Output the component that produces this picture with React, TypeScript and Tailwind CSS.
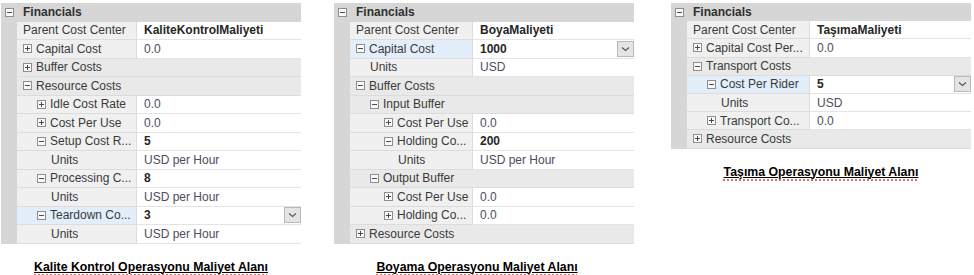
import React from 'react'

type Icon = 'plus' | 'minus'

type Row =
  | { kind: 'header'; label: string }
  | { kind: 'cat'; level: number; label: string; icon: Icon }
  | {
      kind: 'prop'
      level: number
      label: string
      icon?: Icon
      value: string
      bold?: boolean
      selected?: boolean
    }

// indent of the expander box (or text when there is none), per level
const iconIndent = ['pl-[6px]', 'pl-[20px]', 'pl-[34px]', 'pl-[48px]']
const textIndent = ['pl-[6px]', 'pl-[20px]', 'pl-[34px]', 'pl-[48px]']

const panels: { rows: Row[]; caption: string; rowH: string; labelW: string; captionPad?: string }[] = [
  {
    caption: 'Kalite Kontrol Operasyonu Maliyet Alanı',
    rowH: 'h-[18.5px]',
    labelW: 'w-[120px]',
    rows: [
      { kind: 'header', label: 'Financials' },
      { kind: 'prop', level: 0, label: 'Parent Cost Center', value: 'KaliteKontrolMaliyeti', bold: true },
      { kind: 'prop', level: 0, label: 'Capital Cost', icon: 'plus', value: '0.0' },
      { kind: 'cat', level: 0, label: 'Buffer Costs', icon: 'plus' },
      { kind: 'cat', level: 0, label: 'Resource Costs', icon: 'minus' },
      { kind: 'prop', level: 1, label: 'Idle Cost Rate', icon: 'plus', value: '0.0' },
      { kind: 'prop', level: 1, label: 'Cost Per Use', icon: 'plus', value: '0.0' },
      { kind: 'prop', level: 1, label: 'Setup Cost R...', icon: 'minus', value: '5', bold: true },
      { kind: 'prop', level: 2, label: 'Units', value: 'USD per Hour' },
      { kind: 'prop', level: 1, label: 'Processing C...', icon: 'minus', value: '8', bold: true },
      { kind: 'prop', level: 2, label: 'Units', value: 'USD per Hour' },
      { kind: 'prop', level: 1, label: 'Teardown Co...', icon: 'minus', value: '3', bold: true, selected: true },
      { kind: 'prop', level: 2, label: 'Units', value: 'USD per Hour' },
    ],
  },
  {
    caption: 'Boyama Operasyonu Maliyet Alanı',
    rowH: 'h-[18.5px]',
    labelW: 'w-[123px]',
    captionPad: 'pr-[14px]',
    rows: [
      { kind: 'header', label: 'Financials' },
      { kind: 'prop', level: 0, label: 'Parent Cost Center', value: 'BoyaMaliyeti', bold: true },
      { kind: 'prop', level: 0, label: 'Capital Cost', icon: 'minus', value: '1000', bold: true, selected: true },
      { kind: 'prop', level: 1, label: 'Units', value: 'USD' },
      { kind: 'cat', level: 0, label: 'Buffer Costs', icon: 'minus' },
      { kind: 'cat', level: 1, label: 'Input Buffer', icon: 'minus' },
      { kind: 'prop', level: 2, label: 'Cost Per Use', icon: 'plus', value: '0.0' },
      { kind: 'prop', level: 2, label: 'Holding Co...', icon: 'minus', value: '200', bold: true },
      { kind: 'prop', level: 3, label: 'Units', value: 'USD per Hour' },
      { kind: 'cat', level: 1, label: 'Output Buffer', icon: 'minus' },
      { kind: 'prop', level: 2, label: 'Cost Per Use', icon: 'plus', value: '0.0' },
      { kind: 'prop', level: 2, label: 'Holding Co...', icon: 'plus', value: '0.0' },
      { kind: 'cat', level: 0, label: 'Resource Costs', icon: 'plus' },
    ],
  },
  {
    caption: 'Taşıma Operasyonu Maliyet Alanı',
    rowH: 'h-[18.2px]',
    labelW: 'w-[123px]',
    rows: [
      { kind: 'header', label: 'Financials' },
      { kind: 'prop', level: 0, label: 'Parent Cost Center', value: 'TaşımaMaliyeti', bold: true },
      { kind: 'prop', level: 0, label: 'Capital Cost Per...', icon: 'plus', value: '0.0' },
      { kind: 'cat', level: 0, label: 'Transport Costs', icon: 'minus' },
      { kind: 'prop', level: 1, label: 'Cost Per Rider', icon: 'minus', value: '5', bold: true, selected: true },
      { kind: 'prop', level: 2, label: 'Units', value: 'USD' },
      { kind: 'prop', level: 1, label: 'Transport Co...', icon: 'plus', value: '0.0' },
      { kind: 'cat', level: 0, label: 'Resource Costs', icon: 'plus' },
    ],
  },
]

function Expander({ type }: { type: Icon }) {
  return (
    <svg width="9" height="9" viewBox="0 0 9 9" className="shrink-0">
      <rect x="0.5" y="0.5" width="8" height="8" fill="#fafafa" stroke="#8e8e8e" />
      <path d="M2 4.5h5" stroke="#4a4a4a" />
      {type === 'plus' && <path d="M4.5 2v5" stroke="#4a4a4a" />}
    </svg>
  )
}

function DropButton() {
  return (
    <div className="flex h-[16px] w-[17px] shrink-0 items-center justify-center border border-[#b9b9b9] bg-[#e4e4e4]">
      <svg width="9" height="6" viewBox="0 0 9 6">
        <path d="M1 1.5l3.5 3 3.5-3" fill="none" stroke="#555" strokeWidth="1.1" />
      </svg>
    </div>
  )
}

function GridRow({ row, rowH, labelW }: { row: Row; rowH: string; labelW: string }) {
  if (row.kind === 'header') {
    return (
      <div className={`flex items-center bg-[#d6d6d6] ${rowH}`}>
        <div className="flex w-[16px] shrink-0 justify-center pl-px">
          <Expander type="minus" />
        </div>
        <span className="pl-[6px] font-bold text-[#2f2f2f]">{row.label}</span>
      </div>
    )
  }

  if (row.kind === 'cat') {
    return (
      <div className={`flex ${rowH}`}>
        <div className="w-[16px] shrink-0" />
        <div
          className={`flex flex-1 items-center gap-[4px] border-b border-[#dcdcdc] bg-[#e9e9e9] text-[#3a3a3a] ${iconIndent[row.level]}`}
        >
          <Expander type={row.icon} />
          <span>{row.label}</span>
        </div>
      </div>
    )
  }

  return (
    <div className={`flex ${rowH}`}>
      <div className="w-[16px] shrink-0" />
      <div
        className={`flex shrink-0 items-center gap-[4px] overflow-hidden whitespace-nowrap border-b border-r border-[#dcdcdc] text-[#3a3a3a] ${labelW} ${
          row.selected ? 'bg-[#e2eefa]' : 'bg-[#f0f0f0]'
        } ${row.icon ? iconIndent[row.level] : textIndent[row.level]}`}
      >
        {row.icon && <Expander type={row.icon} />}
        <span>{row.label}</span>
      </div>
      <div className="flex min-w-0 flex-1 items-center justify-between border-b border-[#e4e4e4] bg-white pl-[7px]">
        <span className={row.bold ? 'font-bold text-[#262626]' : 'text-[#4d4d5e]'}>{row.value}</span>
        {row.selected && <DropButton />}
      </div>
    </div>
  )
}

export default function App() {
  return (
    <div className="flex h-[275px] w-[974px] items-start bg-white pt-[3px] pl-[1px] font-['Liberation_Sans',Arial,sans-serif] text-[12px] leading-none">
      {panels.map((p, i) => (
        <div key={i} className={`flex w-[300px] flex-col ${i === 1 ? 'ml-[33px]' : i === 2 ? 'ml-[37px]' : ''}`}>
          <div className="flex flex-col bg-[#d6d6d6]">
            {p.rows.map((r, j) => (
              <GridRow key={j} row={r} rowH={p.rowH} labelW={p.labelW} />
            ))}
          </div>
          <div className={`mt-[17px] text-center text-[12.3px] font-bold text-black ${p.captionPad ?? ''}`}>
            <span className="underline decoration-[#e46a6a] decoration-dotted decoration-2 underline-offset-[4px]">
              <span className="underline decoration-black decoration-1 underline-offset-[1px]">{p.caption}</span>
            </span>
          </div>
        </div>
      ))}
    </div>
  )
}
